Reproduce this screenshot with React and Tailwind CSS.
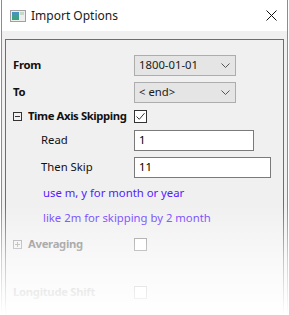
import React from 'react';

const font = { fontFamily: '"Noto Sans", "Open Sans", sans-serif' };

function Chevron() {
  return (
    <svg width="9" height="5" viewBox="0 0 9 5" className="text-[#555]">
      <path d="M0.5 0.5 L4.5 4.5 L8.5 0.5" fill="none" stroke="currentColor" strokeWidth="1" />
    </svg>
  );
}

function Select({ value }) {
  return (
    <div className="flex h-[21px] w-[102px] items-center justify-between border border-[#adadad] bg-[#e5e5e5] pl-[4px] pr-[5px] text-[#1a1a1a]">
      <span>{value}</span>
      <Chevron />
    </div>
  );
}

function Box({ sign, dim }) {
  const c = dim ? '#9a9a9a' : '#333333';
  return (
    <svg width="9" height="9" viewBox="0 0 9 9" className="mr-[6px] shrink-0">
      <rect x="0.5" y="0.5" width="8" height="8" fill="none" stroke={c} />
      <path d="M2 4.5 H7" stroke={c} />
      {sign === '+' && <path d="M4.5 2 V7" stroke={c} />}
    </svg>
  );
}

function Check({ checked, dim }) {
  return (
    <div className={`grid h-[13px] w-[13px] place-items-center border bg-white ${dim ? 'border-[#8a8a8a]' : 'border-[#333]'}`}>
      {checked && (
        <svg width="11" height="11" viewBox="0 0 11 11">
          <path d="M1.5 5.5 L4.3 8.3 L9.5 2.2" fill="none" stroke="#333" strokeWidth="1" />
        </svg>
      )}
    </div>
  );
}

export default function App() {
  return (
    <div className="relative h-[315px] w-[289px] overflow-hidden bg-white text-[11.3px]" style={font}>
      <div className="ml-[1px] flex h-full w-[287px] flex-col border-x border-[#8c8c8c] bg-[#f0f0f0]">
        <div className="flex h-[31px] shrink-0 items-center bg-white">
          <svg width="16" height="12" viewBox="0 0 16 12" className="ml-[8px]">
            <defs>
              <linearGradient id="ic" x1="0" y1="0" x2="0" y2="1">
                <stop offset="0" stopColor="#4a90c8" />
                <stop offset="1" stopColor="#3aa66a" />
              </linearGradient>
            </defs>
            <rect x="0.5" y="0.5" width="15" height="11" fill="#eeeeee" stroke="#a0a0a0" />
            <rect x="2" y="2" width="7" height="8" fill="url(#ic)" />
            <rect x="10" y="2" width="4" height="3" fill="#c8d8c8" />
          </svg>
          <span className="ml-[5px] text-[12px] text-[#1a1a1a]">Import Options</span>
          <svg width="11" height="11" viewBox="0 0 11 11" className="ml-auto mr-[10px]">
            <path d="M0.5 0.5 L10.5 10.5 M10.5 0.5 L0.5 10.5" stroke="#111" strokeWidth="1" />
          </svg>
        </div>

        <div className="mx-[3px] mt-[8px] flex flex-1 flex-col whitespace-nowrap border border-[#6d6d6d] pl-[7px] pt-[15px]">
          <div className="flex h-[21px] items-center">
            <span className="w-[121px] font-bold tracking-[-0.3px] text-[#111]">From</span>
            <Select value="1800-01-01" />
          </div>
          <div className="mt-[6px] flex h-[21px] items-center">
            <span className="w-[121px] font-bold tracking-[-0.3px] text-[#111]">To</span>
            <Select value="< end>" />
          </div>
          <div className="mt-[4px] flex h-[18px] items-center">
            <div className="flex w-[121px] items-center">
              <Box sign="-" />
              <span className="font-bold tracking-[-0.4px] text-[#111]">Time Axis Skipping</span>
            </div>
            <Check checked />
          </div>
          <div className="mt-[5px] flex h-[21px] items-center">
            <span className="w-[121px] pl-[28px] text-[#111]">Read</span>
            <div className="flex h-[21px] w-[120px] items-center border border-[#7a7a7a] bg-white pl-[4px]">1</div>
          </div>
          <div className="mt-[6px] flex h-[21px] items-center">
            <span className="w-[121px] pl-[28px] text-[#111]">Then Skip</span>
            <div className="flex h-[21px] w-[137px] items-center border border-[#7a7a7a] bg-white pl-[4px]">11</div>
          </div>
          <div className="mt-[7px] flex h-[16px] items-center pl-[30px] text-[#5020ff]">
            use m, y for month or year
          </div>
          <div className="mt-[9px] flex h-[16px] items-center pl-[30px] text-[#6a38ff]">
            like 2m for skipping by 2 month
          </div>
          <div className="mt-[9px] flex h-[18px] items-center">
            <div className="flex w-[121px] items-center">
              <Box sign="+" dim />
              <span className="font-bold tracking-[-0.3px] text-[#6d6d6d]">Averaging</span>
            </div>
            <Check dim />
          </div>
          <div className="mt-[30px] flex h-[18px] items-center">
            <span className="w-[121px] font-bold tracking-[-0.3px] text-[#8a8a8a]">Longitude Shift</span>
            <Check dim />
          </div>
        </div>
      </div>
      <div className="pointer-events-none absolute inset-x-0 bottom-0 h-[110px] bg-linear-to-b from-white/0 via-white/60 to-white" />
    </div>
  );
}
